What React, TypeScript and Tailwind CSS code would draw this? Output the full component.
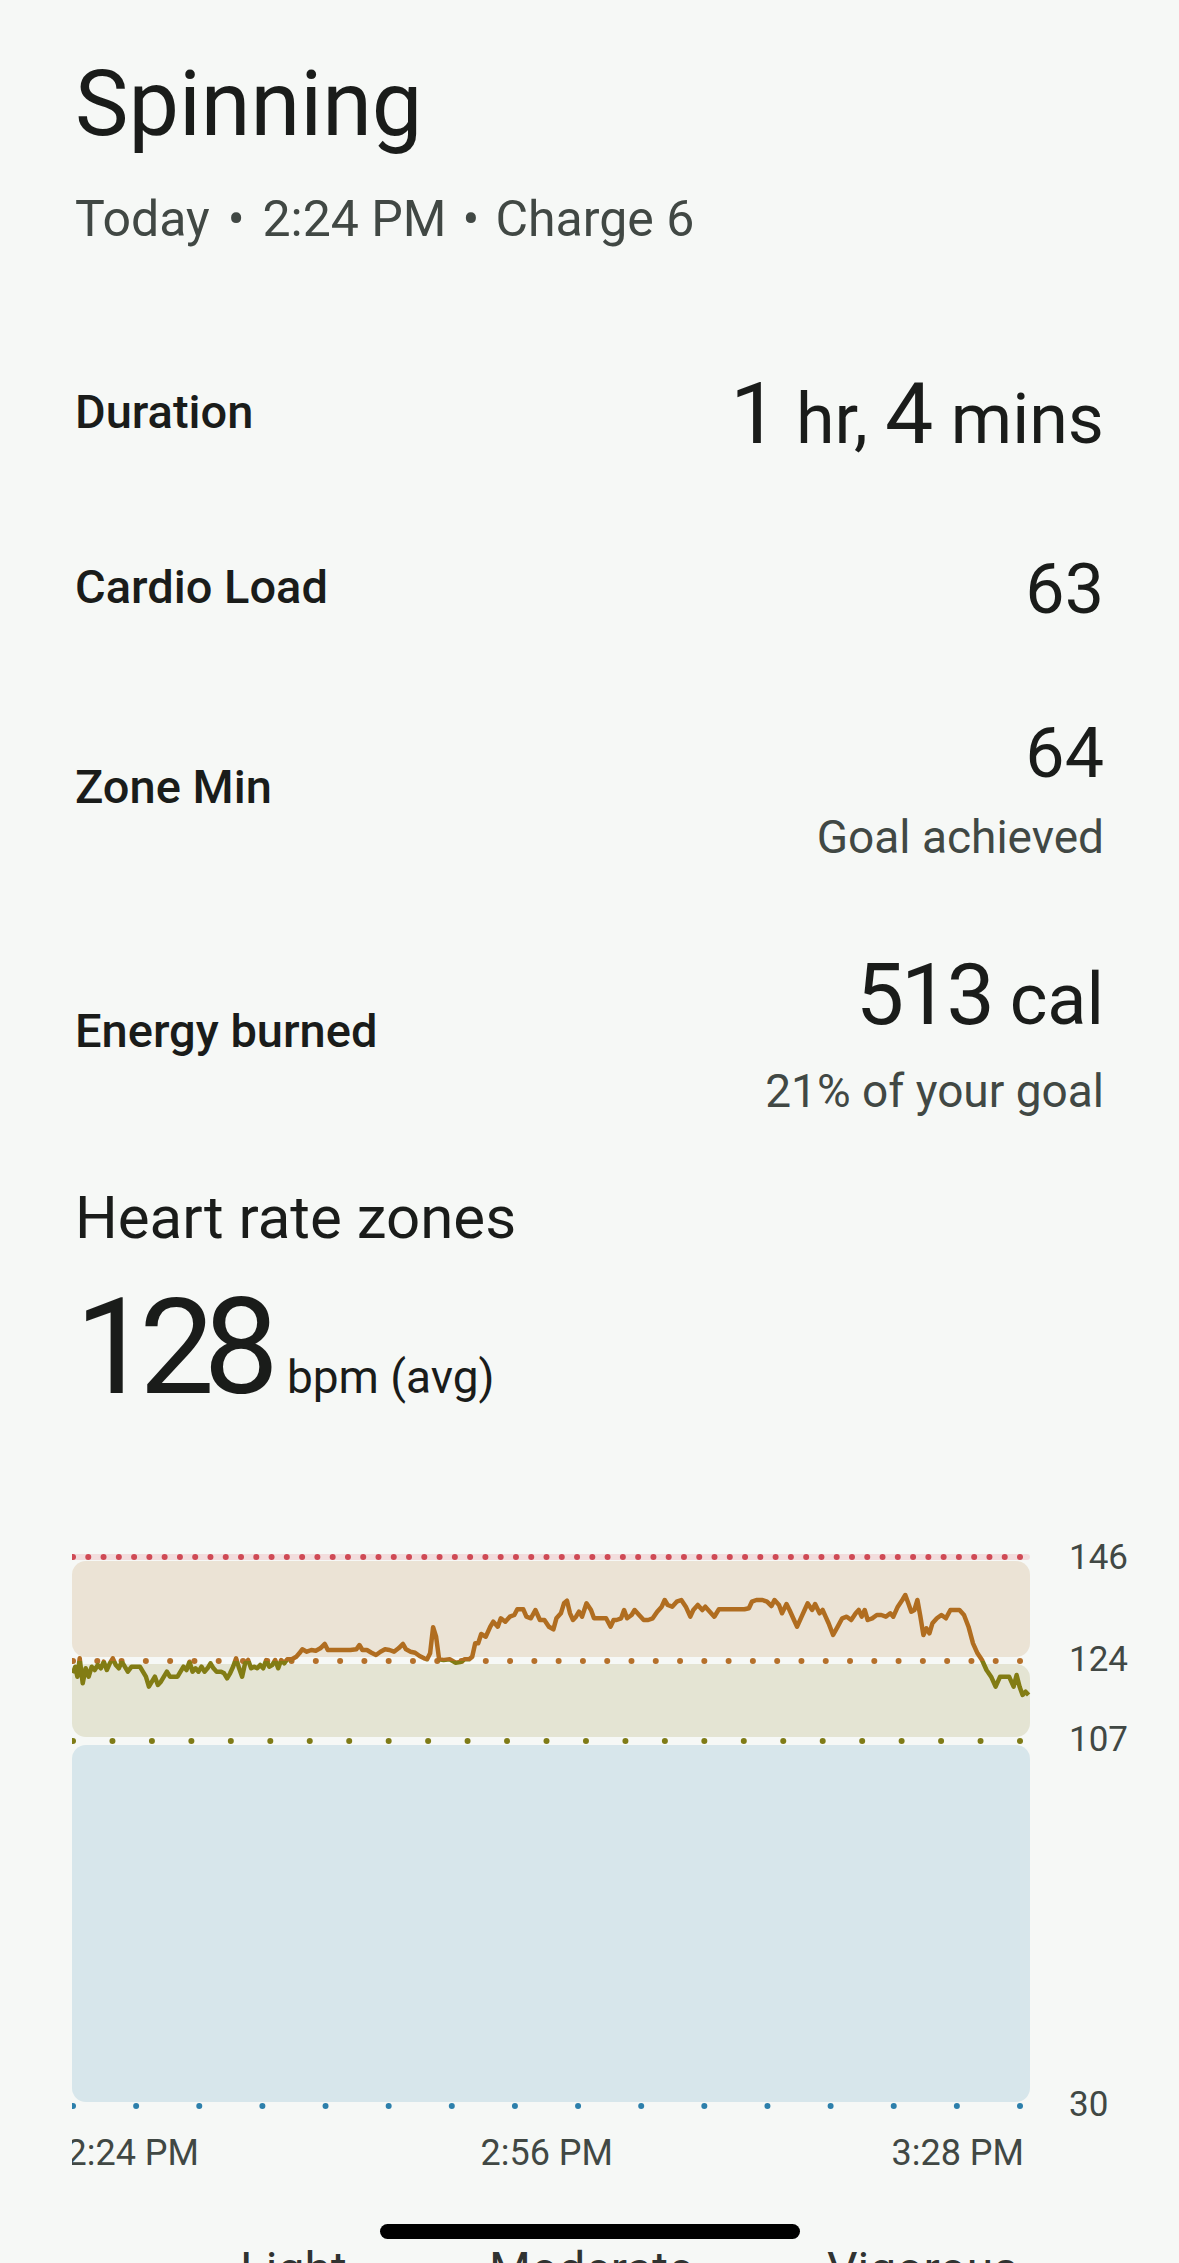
// heart rate trace, traced from the zoomed screenshot (zoom px)
const raw = [
  97,520, 100,500, 103,530, 106,475, 110,550, 114,505, 118,530, 122,500, 126,510, 130,495, 134,505, 138,485,
  142,510, 146,490, 150,475, 154,495, 158,505, 162,485, 166,500, 170,515, 175,500, 180,500, 186,500, 190,515,
  194,530, 198,560, 202,545, 206,530, 210,555, 214,545, 218,530, 222,515, 226,530, 230,530, 236,530, 240,515,
  244,500, 248,510, 252,485, 256,515, 260,505, 264,515, 268,500, 272,515, 276,505, 280,490, 284,505, 288,515,
  294,515, 298,520, 302,535, 306,520, 310,500, 314,475, 318,505, 322,530, 326,490, 330,480, 334,505, 338,500,
  342,505, 346,495, 350,505, 354,480, 358,500, 362,495, 366,480, 370,505, 374,480, 378,490, 382,478, 388,478,
  394,470, 398,460, 402,448, 408,455, 414,450, 420,452, 426,445, 432,432, 436,450, 442,450, 450,450, 458,450,
  466,450, 474,448, 478,435, 482,450, 488,450, 494,458, 500,465, 506,455, 512,448, 518,450, 524,455, 530,445,
  536,432, 540,448, 546,455, 552,458, 558,468, 564,475, 568,478, 572,460, 576,382, 580,410, 584,478, 590,480,
  598,478, 606,488, 612,486, 618,478, 624,478, 628,470, 632,430, 636,430, 640,402, 646,410, 652,380, 656,365,
  662,380, 666,355, 672,365, 678,350, 684,345, 688,328, 696,328, 700,350, 706,355, 712,330, 718,360, 724,360,
  730,380, 736,388, 740,355, 746,340, 750,310, 754,302, 758,340, 762,360, 766,350, 770,335, 774,350, 780,310,
  786,330, 790,355, 798,355, 806,355, 812,380, 816,360, 820,360, 826,355, 830,330, 834,355, 840,345, 844,330,
  850,345, 856,360, 862,360, 868,355, 874,335, 880,320, 884,300, 888,315, 894,320, 900,305, 906,300, 912,320,
  918,350, 922,330, 928,315, 934,330, 938,320, 944,335, 950,350, 956,328, 962,328, 970,328, 980,328, 990,328,
  996,325, 1000,305, 1006,300, 1014,300, 1020,305, 1026,318, 1030,300, 1036,315, 1040,340, 1046,312, 1050,330,
  1056,360, 1060,380, 1066,350, 1070,330, 1074,310, 1080,330, 1084,312, 1090,340, 1094,330, 1098,350, 1102,370,
  1108,405, 1114,380, 1120,355, 1126,350, 1132,360, 1138,340, 1142,330, 1146,350, 1150,330, 1154,360, 1160,355,
  1166,345, 1172,345, 1178,350, 1184,340, 1188,350, 1194,320, 1200,300, 1204,285, 1208,310, 1212,335, 1216,330,
  1220,300, 1224,350, 1228,405, 1232,385, 1236,400, 1240,370, 1246,355, 1252,345, 1258,355, 1264,330, 1270,330,
  1276,330, 1282,345, 1288,380, 1294,430, 1300,460, 1306,480, 1312,510, 1318,530, 1324,560, 1330,530, 1336,530,
  1342,530, 1348,560, 1352,525, 1356,560, 1360,585, 1364,575, 1368,585,
];

const pts: string[] = [];
for (let i = 0; i < raw.length; i += 2) {
  const x = raw[i] / 1.3299 - 72;
  const y = raw[i + 1] / 3 - 50;
  pts.push(`${x.toFixed(1)},${y.toFixed(1)}`);
}
const linePath = "M" + pts.join(" L");

function dots(count: number, y: number, fill: string) {
  const step = 947 / (count - 1);
  return Array.from({ length: count }, (_, i) => (
    <circle key={i} cx={1 + i * step} cy={y} r={3} fill={fill} />
  ));
}

function HeartChart() {
  return (
    <svg width={1107} height={645} className="block">
      <defs>
        <clipPath id="above">
          <rect x={-10} y={-50} width={1000} height={161} />
        </clipPath>
        <clipPath id="below">
          <rect x={-10} y={111} width={1000} height={500} />
        </clipPath>
      </defs>

      <g transform="translate(0,20)">
        <rect x={0} y={4} width={958} height={6} rx={3} fill="#f2dddd" />
        {dots(63, 7, "#cf4a55")}

        <rect x={0} y={11} width={958} height={96} rx={14} fill="#ebe3d5" />
        {dots(40, 111, "#b5702a")}

        <rect x={0} y={114} width={958} height={73} rx={14} fill="#e4e4d3" />
        {dots(25, 191, "#7f7b16")}

        <rect x={0} y={195} width={958} height={357} rx={14} fill="#d7e6eb" />
        {dots(16, 556, "#2c7fab")}

        <path d={linePath} clipPath="url(#above)" fill="none" stroke="#b06d20" strokeWidth={4.5} strokeLinejoin="round" />
        <path d={linePath} clipPath="url(#below)" fill="none" stroke="#827c14" strokeWidth={4.5} strokeLinejoin="round" />

        <g fill="#414844" fontSize={35} fontFamily="Roboto, sans-serif">
          <text x={997} y={19}>146</text>
          <text x={997} y={121}>124</text>
          <text x={997} y={201}>107</text>
          <text x={997} y={566}>30</text>
        </g>
        <g fill="#414844" fontSize={36} fontFamily="Roboto, sans-serif" textAnchor="end">
          <text x={127} y={615}>2:24 PM</text>
          <text x={541} y={615}>2:56 PM</text>
          <text x={952} y={615}>3:28 PM</text>
        </g>
      </g>
    </svg>
  );
}

function StatLabel({ children }: { children: string }) {
  return <span className="pb-[6px] text-[47px] font-medium leading-none">{children}</span>;
}

export default function App() {
  return (
    <div className="relative h-[2263px] w-[1179px] overflow-hidden bg-[#f6f8f6] font-['Roboto',sans-serif] text-[#1a1c1a]">
      <div className="px-[75px]">
        <h1 className="pt-[60px] text-[90px] leading-none">Spinning</h1>
        <p className="mt-[44px] flex text-[50px] leading-none text-[#414844]">
          <span>Today</span>
          <span className="mx-[18px]">•</span>
          <span>2:24 PM</span>
          <span className="mx-[16px]">•</span>
          <span>Charge 6</span>
        </p>

        <div className="mt-[127px] flex items-center justify-between">
          <StatLabel>Duration</StatLabel>
          <span className="text-[86px] leading-none">
            1<span className="text-[70px]"> hr, </span>4<span className="text-[70px]"> mins</span>
          </span>
        </div>

        <div className="mt-[97px] flex items-center justify-between">
          <StatLabel>Cardio Load</StatLabel>
          <span className="text-[70px] leading-none">63</span>
        </div>

        <div className="mt-[94px] flex items-center justify-between">
          <StatLabel>Zone Min</StatLabel>
          <div className="flex flex-col items-end">
            <span className="text-[70px] leading-none">64</span>
            <span className="mt-[26px] text-[46px] leading-none text-[#414844]">Goal achieved</span>
          </div>
        </div>

        <div className="mt-[92px] flex items-center justify-between">
          <StatLabel>Energy burned</StatLabel>
          <div className="flex flex-col items-end">
            <span className="text-[86px] leading-none">
              <span className="tracking-[-3px]">513</span>
              <span className="text-[72px]"> cal</span>
            </span>
            <span className="mt-[30px] text-[46px] leading-none text-[#414844]">21% of your goal</span>
          </div>
        </div>

        <h2 className="mt-[74px] text-[60px] leading-none">Heart rate zones</h2>
        <div className="mt-[33px] flex items-baseline">
          <span className="text-[134px] leading-none tracking-[-11px]">128</span>
          <span className="ml-[19px] text-[46px] leading-none">bpm (avg)</span>
        </div>
      </div>

      <div className="mt-[115px] pl-[72px]">
        <HeartChart />
      </div>

      <div className="mt-[71px] flex pl-[240px] text-[48px] leading-none text-[#303331]">
        <span className="w-[249px]">Light</span>
        <span className="w-[338px]">Moderate</span>
        <span>Vigorous</span>
      </div>

      <div className="absolute bottom-[24px] left-1/2 h-[15px] w-[420px] -translate-x-1/2 rounded-full bg-black" />
    </div>
  );
}
